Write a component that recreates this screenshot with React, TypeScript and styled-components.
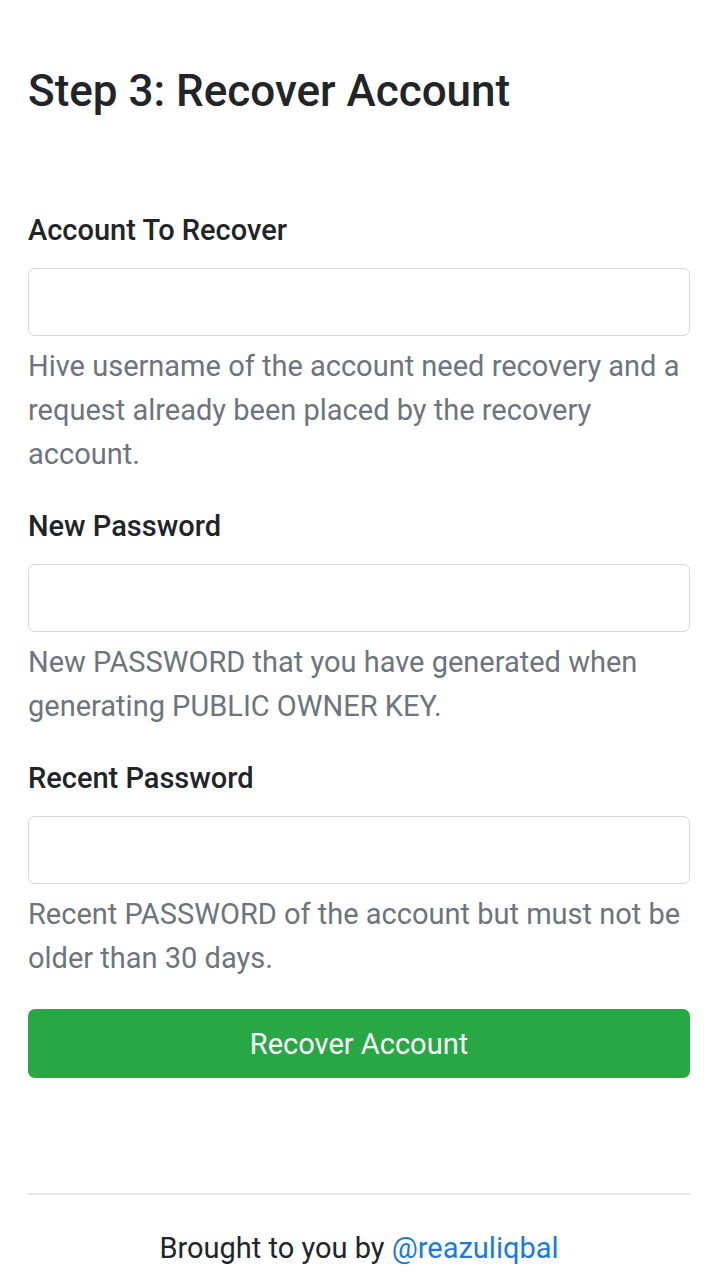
import styled, { createGlobalStyle } from "styled-components";

const GlobalStyle = createGlobalStyle`
	html, body {
		margin: 0;
		padding: 0;
		background: #fff;
	}
	body {
		font-family: Roboto, "Liberation Sans", sans-serif;
		color: #212529;
	}
	* {
		box-sizing: border-box;
	}
`;

const Page = styled.div`
	padding: 62px 27px 0 28px;
`;

const Title = styled.h3`
	margin: 0 0 88px;
	font-size: 44px;
	font-weight: 500;
	line-height: 58px;
	color: #212529;
`;

const Form = styled.form`
	display: flex;
	flex-direction: column;
`;

const Group = styled.div`
	margin-bottom: 28px;
	&:last-of-type {
		margin-bottom: 29px;
	}
`;

const Label = styled.label`
	display: block;
	margin-bottom: 16px;
	font-size: 29px;
	font-weight: 500;
	line-height: 44px;
`;

const Input = styled.input`
	display: block;
	width: 100%;
	height: 68px;
	padding: 10px 20px;
	border: 1.5px solid #d3d7db;
	border-radius: 7px;
	font-family: inherit;
	font-size: 29px;
	color: #495057;
	background: #fff;
	outline: none;
`;

const Help = styled.small`
	display: block;
	margin-top: 8px;
	font-size: 29px;
	line-height: 44px;
	color: #6c757d;
`;

const Button = styled.button`
	width: 100%;
	height: 69px;
	border: none;
	border-radius: 7px;
	background: #28a745;
	color: #fff;
	font-family: inherit;
	font-size: 29px;
	cursor: pointer;
`;

const Rule = styled.hr`
	margin: 115px 0 0;
	border: none;
	border-top: 2px solid #e6e6e6;
`;

const Footer = styled.p`
	margin: 31px 0 0;
	text-align: center;
	font-size: 29px;
	line-height: 44px;

	a {
		color: #1a7bd8;
		text-decoration: none;
	}
`;

const fields = [
	{
		label: "Account To Recover",
		type: "text",
		help: "Hive username of the account need recovery and a request already been placed by the recovery account.",
	},
	{
		label: "New Password",
		type: "password",
		help: "New PASSWORD that you have generated when generating PUBLIC OWNER KEY.",
	},
	{
		label: "Recent Password",
		type: "password",
		help: "Recent PASSWORD of the account but must not be older than 30 days.",
	},
];

export default function App() {
	return (
		<>
			<GlobalStyle />
			<Page>
				<Title>Step 3: Recover Account</Title>
				<Form onSubmit={(e) => e.preventDefault()}>
					{fields.map((f) => (
						<Group key={f.label}>
							<Label>{f.label}</Label>
							<Input type={f.type} />
							<Help>{f.help}</Help>
						</Group>
					))}
					<Button type="submit">Recover Account</Button>
				</Form>
				<Rule />
				<Footer>
					Brought to you by <a href="#">@reazuliqbal</a>
				</Footer>
			</Page>
		</>
	);
}
